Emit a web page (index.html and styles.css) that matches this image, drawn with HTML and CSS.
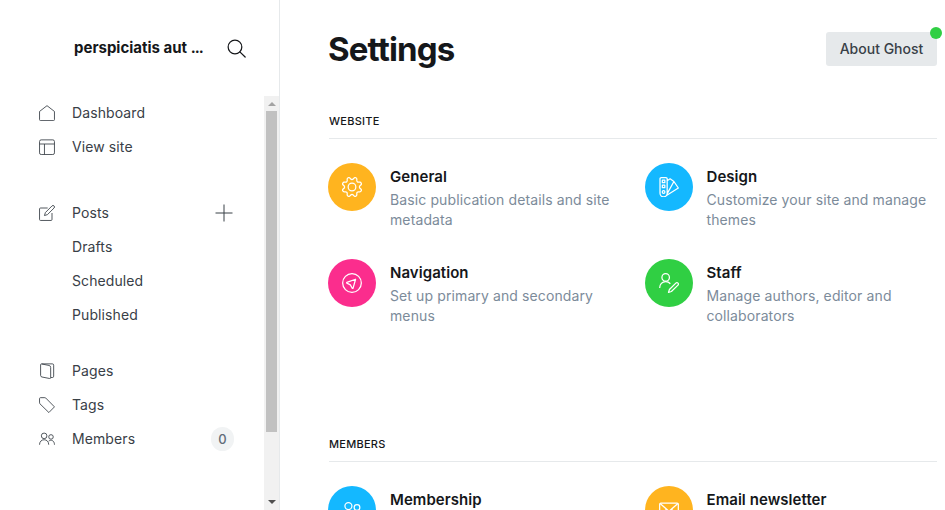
FILE: index.html
```html
<!DOCTYPE html>
<html lang="en">
<head>
<meta charset="utf-8">
<title>Settings</title>
<link rel="stylesheet" href="styles.css">
</head>
<body>
<div class="app">
  <aside class="sidebar">
    <header class="site">
      <strong class="site-name">perspiciatis aut <span class="more">...</span></strong>
      <svg class="search" viewBox="0 0 20 20"><circle cx="8.4" cy="8.4" r="7.2"/><path d="M13.5 13.5l5.600 5.500"/></svg>
    </header>
    <div class="scroll">
      <nav class="nav">
        <ul>
          <li><svg class="icon" viewBox="0 0 24 24"><path d="M.8 9.7 12 1l11.2 8.7V22a1.5 1.5 0 0 1-1.5 1.4H2.3A1.5 1.5 0 0 1 .8 22z"/></svg><a>Dashboard</a></li>
          <li><svg class="icon" viewBox="0 0 24 24"><rect x=".8" y="1.3" width="22.4" height="22" rx="2.5"/><path d="M.8 7.5h22.4M8.2 7.5v15.8"/></svg><a>View site</a></li>
        </ul>
        <ul class="posts">
          <li><svg class="icon" viewBox="0 0 24 24"><path d="M13 4.5H2.3A1.5 1.5 0 0 0 .8 6v15.7a1.5 1.5 0 0 0 1.5 1.5H18a1.5 1.5 0 0 0 1.5-1.5V12M22.6 1.4a2.2 2.2 0 0 0-3.1 0L9.6 11.3 8.2 15.8l4.5-1.4 9.9-9.9a2.2 2.2 0 0 0 0-3.1z"/></svg><a>Posts</a><svg class="plus" viewBox="0 0 18 18"><path d="M9 .5v17M.5 9h17"/></svg></li>
          <li class="sub"><a>Drafts</a></li>
          <li class="sub"><a>Scheduled</a></li>
          <li class="sub"><a>Published</a></li>
        </ul>
        <ul>
          <li><svg class="icon" viewBox="0 0 24 24"><path d="M4 1.3h16a2 2 0 0 1 2 2v16.5a2 2 0 0 1-2 2h-2.5M3.7 1.4l11.4 2.3a3 3 0 0 1 2.4 3v15.1a1.5 1.5 0 0 1-1.9 1.4L4.5 21A2.5 2.5 0 0 1 2.4 18.600V2.500A1.200 1.200 0 0 1 3.700 1.400z"/></svg><a>Pages</a></li>
          <li><svg class="icon" viewBox="0 0 24 24"><path d="M.8 2.300A1.500 1.500 0 0 1 2.300 1h6.500a2 2 0 0 1 1.400.6l13 13.200-8.400 8.500L1.400 10.200a2 2 0 0 1-.6-1.400z"/></svg><a>Tags</a></li>
          <li><svg class="icon" viewBox="0 0 24 24"><circle cx="7.700" cy="7.300" r="4.200"/><circle cx="18" cy="8.900" r="3.400"/><path d="M.8 20.600c0-4.700 3-7.500 6.900-7.500s6.900 2.800 6.900 7.500M14.600 15.200c3.700-3 8.600-.6 8.600 5.400"/></svg><a>Members</a><span class="count">0</span></li>
        </ul>
      </nav>
      <div class="bar"><i class="up"></i><i class="thumb"></i><i class="down"></i></div>
    </div>
  </aside>
  <main class="main">
    <header class="top">
      <h1>Settings</h1>
      <button class="about">About Ghost<i class="dot"></i></button>
    </header>
    <section class="website">
      <h2>Website</h2>
      <div class="grid">
        <article><span class="circle yellow"><svg viewBox="0 0 24 24"><path d="M10.546 2.438a1.957 1.957 0 002.908 0L14.400 1.400a1.959 1.959 0 013.410 1.413l-.071 1.400a1.958 1.958 0 002.051 2.054l1.400-.071a1.959 1.959 0 011.410 3.410l-1.042.940a1.960 1.960 0 000 2.909l1.042.940a1.959 1.959 0 01-1.413 3.410l-1.400-.071a1.958 1.958 0 00-2.056 2.056l.071 1.400A1.959 1.959 0 0114.400 22.600l-.941-1.041a1.959 1.959 0 00-2.908 0L9.606 22.600A1.959 1.959 0 016.200 21.192l.072-1.400a1.958 1.958 0 00-2.056-2.056l-1.400.071A1.958 1.958 0 011.400 14.400l1.041-.940a1.960 1.960 0 000-2.909L1.400 9.606A1.958 1.958 0 012.809 6.200l1.400.071a1.958 1.958 0 002.058-2.060L6.200 2.810A1.959 1.959 0 019.606 1.400z"/><circle cx="12" cy="12" r="4.600"/></svg></span>
          <div><h3>General</h3><p>Basic publication details and site metadata</p></div></article>
        <article><span class="circle blue"><svg viewBox="0 0 24 24"><path d="M2.700.800h5.600a1.500 1.500 0 0 1 1.500 1.500v17.200a4 4 0 0 1-8.600 0V2.300A1.500 1.500 0 0 1 2.700.800zM9.800 4.500l3.500-2.300 4.600 3.200L9.500 20.500M17.900 5.400l5.300 7.800L9 22.200"/><path d="M4 3.800h3v3H4zM4 9.800h3v3H4z"/><circle cx="5.500" cy="18" r="1.600"/></svg></span>
          <div><h3>Design</h3><p>Customize your site and manage themes</p></div></article>
        <article><span class="circle pink"><svg viewBox="0 0 24 24"><circle cx="12" cy="12" r="11.200"/><path d="M16.300 7.500 5.800 11.200a.5.500 0 0 0 0 .9l4.200 2.200 2.300 4a.6.600 0 0 0 1-.1z"/></svg></span>
          <div><h3>Navigation</h3><p>Set up primary and secondary menus</p></div></article>
        <article><span class="circle green"><svg viewBox="0 0 24 24"><circle cx="8" cy="5.300" r="4.500"/><path d="M.800 18c0-4.700 3-7.700 7.200-7.700 2.400 0 4.300 1 5.600 2.600M22.800 12.100a1.800 1.800 0 0 0-2.600 0l-7.700 7.700-1.100 3.400 3.500-1 7.900-7.700a1.700 1.700 0 0 0 0-2.400z"/></svg></span>
          <div><h3>Staff</h3><p>Manage authors, editor and collaborators</p></div></article>
      </div>
    </section>
    <section>
      <h2>Members</h2>
      <div class="grid">
        <article><span class="circle blue"><svg viewBox="0 0 24 24"><circle cx="7.700" cy="7.300" r="4.200"/><circle cx="18" cy="8.900" r="3.400"/><path d="M.8 20.600c0-4.700 3-7.500 6.900-7.500s6.900 2.800 6.900 7.500M14.600 15.200c3.700-3 8.600-.6 8.600 5.400"/></svg></span>
          <div><h3>Membership</h3></div></article>
        <article><span class="circle yellow"><svg viewBox="0 0 24 24"><rect x=".8" y="3.700" width="22.400" height="16.500" rx="1.500"/><path d="M1.300 4.200l9.300 8.200a2.200 2.200 0 0 0 2.800 0l9.300-8.200M1.500 19.500l7-8M22.500 19.500l-7-8"/></svg></span>
          <div><h3>Email newsletter</h3></div></article>
      </div>
    </section>
  </main>
</div>
</body>
</html>
```

FILE: styles.css
```css
* { box-sizing: border-box; }
body { margin: 0; background: #fff; color: #15171a; font-family: Inter, sans-serif; overflow: hidden; }
h1, h2, h3, p, ul { margin: 0; padding: 0; }
ul { list-style: none; }
svg { fill: none; stroke: currentColor; flex: none; stroke-linejoin: round; }
.app { display: flex; height: 510px; overflow: hidden; }
.sidebar { width: 280px; flex: none; border-right: 1px solid #e6e9eb; display: flex; flex-direction: column; }
.site { height: 96px; display: flex; align-items: center; justify-content: space-between; padding: 0 32px 0 74px; }
.site-name { font-size: 15px; font-weight: 700; line-height: 20px; }
.more { letter-spacing: -.9px; }
.search { width: 19px; height: 19px; margin-right: 1px; stroke-width: 1.3; stroke-linecap: round; }
.scroll { flex: 1; display: flex; min-height: 0; }
.nav { flex: 1; }
.nav ul { margin-bottom: 22px; }
.nav .posts { margin-top: 32px; }
.nav ul:first-child { margin-bottom: 32px; }
.nav li { height: 34px; display: flex; align-items: center; padding: 0 30px 0 39px; color: #394047; font-size: 14px; letter-spacing: .1px; }
.nav a { line-height: 20px; }
.icon { width: 16px; height: 16px; margin-right: 17px; stroke-width: 1.3; }
.nav .sub { padding-left: 72px; }
.plus { width: 18px; height: 18px; margin-left: auto; margin-right: 1px; stroke-width: 1; }
.count { margin-left: auto; width: 23px; height: 24px; border-radius: 12px; background: #f1f3f4; color: #626d79; font-size: 13px; font-weight: 500; letter-spacing: 0; line-height: 24px; text-align: center; }
.bar { width: 15px; background: #f1f1f1; display: flex; flex-direction: column; align-items: center; }
.up, .down { width: 0; border: 4px solid transparent; }
.up { border-top: 0; border-bottom-color: #a3a3a3; margin: 6px 0 5px; }
.thumb { width: 11px; height: 321px; background: #c1c1c1; }
.down { border-bottom: 0; border-top-color: #505050; margin-top: auto; margin-bottom: 6px; }
.main { flex: 1; padding: 0 8px 0 49px; }
.top { height: 98px; display: flex; align-items: center; justify-content: space-between; }
h1 { font-size: 33px; line-height: 40px; font-weight: 700; letter-spacing: -.85px; margin-left: -1px; }
.about { position: relative; width: 111px; height: 34px; border: 0; border-radius: 3px; background: #e6e9eb; color: #394047; font: 500 14px/34px Inter, sans-serif; letter-spacing: 0; padding: 0; }
.dot { position: absolute; width: 12px; height: 12px; border-radius: 50%; background: #30cf43; top: -5px; right: -5px; }
h2 { font-size: 11px; font-weight: 500; line-height: 16px; letter-spacing: .25px; text-transform: uppercase; padding: 15px 0 9px; border-bottom: 1px solid #e6e9eb; }
.website { height: 323px; }
.grid { display: grid; grid-template-columns: 292.5px 292px; column-gap: 24px; row-gap: 27px; padding-top: 24px; margin-left: -1px; }
article { display: flex; min-height: 69px; }
.circle { width: 48px; height: 48px; border-radius: 50%; flex: none; margin-right: 14px; color: #fff; display: flex; align-items: center; justify-content: center; }
.circle svg { width: 20px; height: 20px; stroke-width: 1.5; }
.yellow { background: #ffb41f; }
.blue { background: #14b8ff; }
.pink { background: #fb2d8d; }
.green { background: #30cf43; }
h3 { font-size: 15px; font-weight: 600; line-height: 20px; letter-spacing: .06px; margin-top: 4px; }
p { color: #7c8b9a; font-size: 14px; line-height: 20px; letter-spacing: .11px; margin-top: 3px; }
```
